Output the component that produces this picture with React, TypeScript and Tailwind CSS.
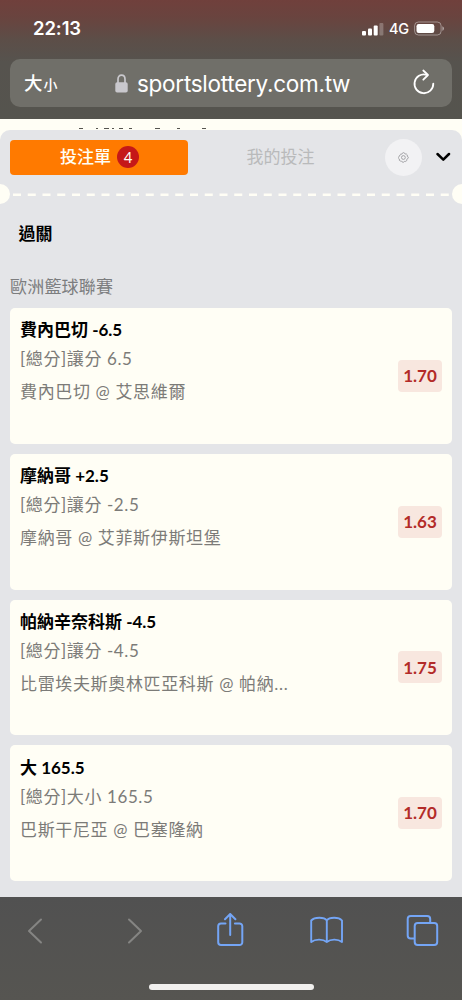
const bets = [
  { title: "費內巴切 -6.5", type: "[總分]讓分 6.5", match: "費內巴切 @ 艾思維爾", odds: "1.70" },
  { title: "摩納哥 +2.5", type: "[總分]讓分 -2.5", match: "摩納哥 @ 艾菲斯伊斯坦堡", odds: "1.63" },
  { title: "帕納辛奈科斯 -4.5", type: "[總分]讓分 -4.5", match: "比雷埃夫斯奧林匹亞科斯 @ 帕納...", odds: "1.75" },
  { title: "大 165.5", type: "[總分]大小 165.5", match: "巴斯干尼亞 @ 巴塞隆納", odds: "1.70" },
];

const StatusBar = () => (
  <div className="flex h-[59px] items-start justify-between pl-[33px] pr-[17px] pt-[18px] text-white">
    <span className="text-[18.5px] font-semibold leading-[21px] tracking-[-0.1px]">22:13</span>
    <div className="flex h-[21px] items-center">
      <svg width="22" height="14" viewBox="0 0 22 14" fill="#fff">
        <rect x="0" y="9" width="4" height="4.5" rx="1" />
        <rect x="6" y="6.5" width="4" height="7" rx="1" />
        <rect x="11.7" y="3.5" width="4" height="10" rx="1" />
        <rect x="17.4" y="1" width="4" height="12.5" rx="1" opacity="0.25" />
      </svg>
      <span className="ml-[5px] w-[20px] text-[14.5px] font-medium leading-[21px] tracking-[-0.3px]">4G</span>
      <svg className="ml-[5px]" width="31" height="15" viewBox="0 0 31 15" fill="none">
        <rect x="0.6" y="1" width="26.5" height="13" rx="3.8" stroke="#fff" strokeOpacity="0.4" />
        <rect x="2.5" y="3" width="17.8" height="9" rx="2.2" fill="#fff" />
        <path d="M28.4 5.2v4.6c1-.4 1.6-1.3 1.6-2.3s-.6-1.9-1.6-2.3z" fill="#fff" fillOpacity="0.5" />
      </svg>
    </div>
  </div>
);

const AddressBar = () => (
  <div className="mx-[10px] flex h-[48px] items-center rounded-[10px] bg-[#706f69] text-white">
    <div className="ml-[14px] flex w-[91px] items-baseline gap-px pt-[2px] font-medium leading-[30px]">
      <span className="text-[18.5px]">大</span>
      <span className="text-[14px]">小</span>
    </div>
    <svg width="13" height="19" viewBox="0 0 13 19" fill="none">
      <path d="M3 9V5.2C3 2.8 4.4 1.2 6.5 1.2S10 2.8 10 5.2V9" stroke="#c9c8cd" strokeWidth="1.7" />
      <rect x="0.3" y="8.3" width="12.4" height="10.2" rx="1.8" fill="#c9c8cd" />
    </svg>
    <span className="ml-[9px] w-[214px] whitespace-nowrap pt-px text-[22.5px] leading-[30px] tracking-[-0.27px]">
      sportslottery.com.tw
    </span>
    <svg className="ml-[61px]" width="24" height="28" viewBox="0 0 24 28" fill="none" stroke="#fff" strokeWidth="1.8" strokeLinecap="round" strokeLinejoin="round">
      <path d="M14.5 5.8A9.4 9.4 0 1 0 21.3 14.6" />
      <path d="M11.3 1.5l4.7 4.5-4.7 4.7" />
    </svg>
  </div>
);

const Tabs = () => (
  <div className="flex items-center pl-[10px] pt-[8.5px]">
    <button className="flex h-[35px] w-[178px] items-center justify-center gap-[6px] rounded-[4px] bg-[#ff7a00] pl-px text-[17px] font-medium text-[#fffef5]">
      <span className="-mt-px">投注單</span>
      <span className="flex h-[22px] w-[22px] items-center justify-center rounded-full bg-[#c51818] text-[15px] font-normal">
        4
      </span>
    </button>
    <button className="-mt-px w-[185px] text-center text-[17px] font-normal text-[#b9babb]">我的投注</button>
    <button className="ml-[12px] flex h-[37px] w-[37px] items-center justify-center rounded-full bg-[#f2f2f4]">
      <svg width="11" height="11" viewBox="0 0 11 11" fill="none" stroke="#929295" strokeWidth="0.8" strokeLinejoin="round">
        <path d="M4.4 1.1L5.5.6l1.1.5.6 1 1.2-.1.9.9-.2 1.2 1 .7.2 1-.7 1-.8.5v1.2l-1 .9-1.2-.1-.7.8-.9.2-1-.5-.6-.8-1.2.1-.9-.9.1-1.2-.9-.7-.2-.9.6-1 .9-.5V3l1-.9 1 .1z" />
        <circle cx="5.4" cy="5.5" r="1.9" />
      </svg>
    </button>
    <svg className="ml-[14px]" width="15" height="10" viewBox="0 0 15 10" fill="none" stroke="#000" strokeWidth="2.5" strokeLinecap="round" strokeLinejoin="round">
      <path d="M1.5 2L7.3 7.6 13 2" />
    </svg>
  </div>
);

const Perforation = () => (
  <div className="flex h-[20px] items-center overflow-hidden">
    <span className="-ml-[10px] h-[20px] w-[20px] shrink-0 rounded-full bg-[#fffef5]" />
    <svg className="shrink-0" width="442" height="4" viewBox="0 0 442 4">
      <path d="M3 2.8H442" stroke="#fffef5" strokeWidth="2.6" strokeDasharray="8 6.75" />
    </svg>
    <span className="-mr-[10px] h-[20px] w-[20px] shrink-0 rounded-full bg-[#fffef5]" />
  </div>
);

const BetCard = ({ title, type, match, odds }: (typeof bets)[number]) => (
  <div className="flex h-[135.7px] justify-between rounded-[5px] bg-[#fffef5] px-[10px]">
    <div className="pt-[9.3px]">
      <p className="text-[17px] font-bold leading-[25px] text-black">{title}</p>
      <p className="mt-[4px] text-[17px] font-normal leading-[25px] tracking-[0.6px] text-[#7c7b78]">{type}</p>
      <p className="mt-[8px] whitespace-nowrap text-[17px] font-normal leading-[25px] tracking-[0.65px] text-[#7c7b78]">{match}</p>
    </div>
    <span className="flex h-[32px] w-[44px] items-center justify-center self-center rounded-[4px] bg-[#f8e7df] text-[17px] font-bold text-[#b32b28]">
      {odds}
    </span>
  </div>
);

const Toolbar = () => (
  <div className="flex h-[103px] flex-col items-center bg-[linear-gradient(#515151,#565551)]">
    <div className="flex h-[67px] w-full items-center pl-[27px]">
      <svg width="16" height="26" viewBox="0 0 16 26" fill="none" stroke="#858583" strokeWidth="2" strokeLinecap="round" strokeLinejoin="round">
        <path d="M14 1.5L2 13l12 11.5" />
      </svg>
      <svg className="ml-[84px]" width="16" height="26" viewBox="0 0 16 26" fill="none" stroke="#858583" strokeWidth="2" strokeLinecap="round" strokeLinejoin="round">
        <path d="M2 1.5L14 13 2 24.5" />
      </svg>
      <svg className="ml-[73px]" width="28" height="36" viewBox="0 0 28 36" fill="none" stroke="#74a5f5" strokeWidth="2" strokeLinecap="round" strokeLinejoin="round">
        <path d="M9.5 10.500H5a2.800 2.800 0 0 0-2.800 2.800v16a2.800 2.800 0 0 0 2.800 2.800h18.500a2.800 2.800 0 0 0 2.800-2.800v-16a2.800 2.800 0 0 0-2.800-2.800H18.900" />
        <path d="M14.200 22V1.200M9 6.200l5.200-5.200 5.200 5.200" />
      </svg>
      <svg className="ml-[66px]" width="34" height="30" viewBox="0 0 34 30" fill="none" stroke="#74a5f5" strokeWidth="1.9" strokeLinecap="round" strokeLinejoin="round">
        <path d="M16.800 4.500C14.300.8 4.500.8 1.200 4.500V26c4.200-3.400 12-3 15.600 0 3.600-3 11-3.400 15.200 0V4.500C28.800.8 19.300.8 16.800 4.500zM16.800 4.500V26" />
      </svg>
      <svg className="ml-[61px]" width="34" height="34" viewBox="0 0 34 34" fill="none" stroke="#74a5f5" strokeWidth="2" strokeLinejoin="round">
        <path d="M9.700 24.500H5.700a3 3 0 0 1-3-3V5a3 3 0 0 1 3-3h16.500a3 3 0 0 1 3 3v4" />
        <rect x="9.700" y="9" width="22.500" height="22" rx="3" />
      </svg>
    </div>
    <div className="mt-[20px] h-[6px] w-[165px] rounded-full bg-[#f1f0ee]" />
  </div>
);

export default function App() {
  return (
    <div className="flex h-[1000px] w-[462px] flex-col overflow-hidden bg-[#fffef5] font-[Lato,'Noto_Sans_CJK_TC',sans-serif]">
      <header className="h-[119px] shrink-0 bg-[linear-gradient(#70403c_0px,#69443f_18px,#5c4e48_40px,#56534e_62px,#55544e_119px)] font-[Inter,'Noto_Sans_CJK_TC',sans-serif]">
        <StatusBar />
        <AddressBar />
      </header>

      {/* page heading peeking out above the slip */}
      <svg className="shrink-0" width="462" height="11" viewBox="0 0 462 11">
        <path d="M79 9.5h4M96 9.5h2M104 9.5h5M112 9.5h2M119 9.5h4M129 9.5h3M155 9.5h5M177 9.5h3M202 9.5h4" stroke="#55544f" strokeWidth="1" />
      </svg>

      <main className="h-[767px] shrink-0 rounded-t-[10px] bg-[#e4e5e8]">
        <Tabs />
        <div className="mt-[8px]">
          <Perforation />
        </div>
        <h2 className="mt-[17px] pl-[18.5px] text-[17px] font-bold leading-[25px] text-black">過關</h2>
        <h3 className="mt-[28px] pl-[10px] text-[17px] font-normal leading-[25px] tracking-[0.2px] text-[#7c7d7f]">歐洲籃球聯賽</h3>
        <div className="mx-[10px] mt-[9.7px] flex flex-col gap-[10px]">
          {bets.map((bet) => (
            <BetCard key={bet.title} {...bet} />
          ))}
        </div>
      </main>

      <Toolbar />
    </div>
  );
}
